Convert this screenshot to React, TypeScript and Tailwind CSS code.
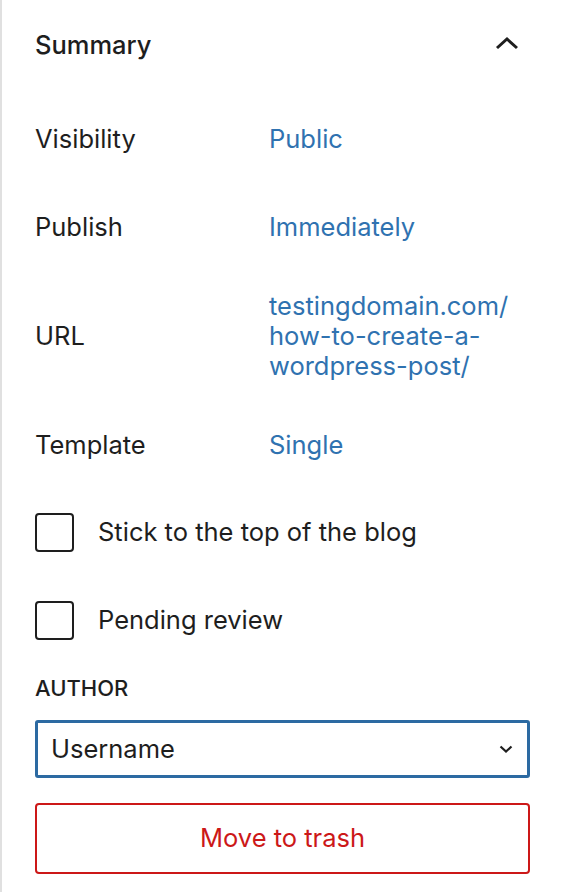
import { useState } from 'react';

const ROWS = [
  { label: 'Visibility', value: ['Public'] },
  { label: 'Publish', value: ['Immediately'] },
  { label: 'URL', value: ['testingdomain.com/', 'how-to-create-a-', 'wordpress-post/'] },
  { label: 'Template', value: ['Single'] },
];

function Checkbox({ label }: { label: string }) {
  const [checked, setChecked] = useState(false);
  return (
    <label className="flex items-center h-[39px] cursor-pointer">
      <span
        onClick={() => setChecked(!checked)}
        className="w-[39px] h-[39px] shrink-0 rounded-[4px] border-2 border-[#1e1e1e] bg-white"
      />
      <span className="ml-[24px] text-[25.5px] text-[#1e1e1e]">{label}</span>
    </label>
  );
}

export default function App() {
  return (
    <div
      className="w-[562px] h-[892px] bg-white border-l-2 border-[#e0e0e0] pl-[33px] pr-[32px] text-[#1e1e1e]"
      style={{ fontFamily: 'Inter, "Noto Sans", sans-serif' }}
    >
      <div className="flex items-center justify-between h-[92px] pb-[1px]">
        <span className="text-[25.5px] font-medium">Summary</span>
        <svg width="24" height="14" viewBox="0 0 24 14" className="mr-[11px] mb-[6px]">
          <path d="M2 12 L12 3 L22 12" fill="none" stroke="#1e1e1e" strokeWidth="3" />
        </svg>
      </div>

      <div className="flex flex-col gap-[40px] mt-[23px]">
        {ROWS.map((row) => (
          <div key={row.label} className="flex items-center min-h-[48px]">
            <span className="w-[234px] shrink-0 text-[25.5px]">{row.label}</span>
            <div className="flex flex-col text-[25.5px] leading-[30px] text-[#2f72b0]">
              {row.value.map((v) => (
                <span key={v}>{v}</span>
              ))}
            </div>
          </div>
        ))}
      </div>

      <div className="flex flex-col gap-[49px] mt-[44px]">
        <Checkbox label="Stick to the top of the blog" />
        <Checkbox label="Pending review" />
      </div>

      <div className="mt-[37px] text-[22px] font-medium uppercase leading-none">Author</div>

      <div className="mt-[21px] h-[58px] border-[3px] border-[#2c6aa2] rounded-[3px] flex items-center justify-between pl-[13px] pr-[14px]">
        <span className="text-[25.5px]">Username</span>
        <svg width="14" height="9" viewBox="0 0 14 9">
          <path d="M1.5 1.5 L7 6.5 L12.5 1.5" fill="none" stroke="#1e1e1e" strokeWidth="2.2" />
        </svg>
      </div>

      <button className="mt-[25px] w-full h-[71px] border-2 border-[#cc1818] rounded-[4px] text-[25.5px] text-[#cc1818] bg-white">
        Move to trash
      </button>
    </div>
  );
}
